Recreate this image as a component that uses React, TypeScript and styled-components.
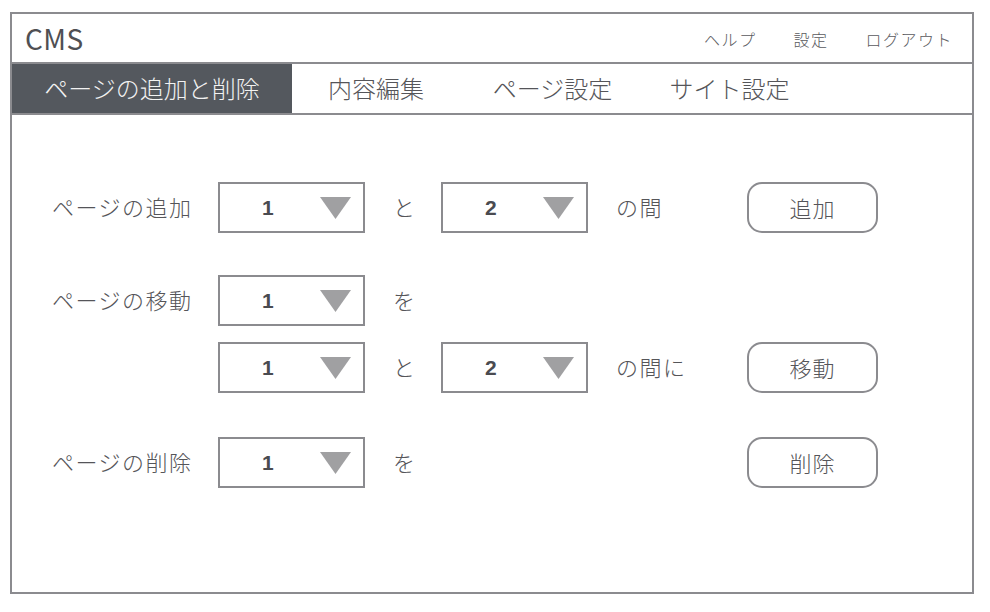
import React from 'react'
import styled, { createGlobalStyle } from 'styled-components'

const GlobalStyle = createGlobalStyle`
  body {
    margin: 0;
    background: #ffffff;
    font-family: "Noto Sans CJK JP", "Noto Sans", sans-serif;
    font-weight: 300;
    color: #555559;
  }
`

const Frame = styled.div`
  box-sizing: border-box;
  width: 964px;
  height: 582px;
  margin: 12px 0 0 10px;
  border: 2px solid #8b8b8f;
  display: flex;
  flex-direction: column;
`

const Header = styled.header`
  height: 48px;
  border-bottom: 2px solid #8b8b8f;
  display: flex;
  align-items: center;
  justify-content: space-between;
  padding: 0 19px 0 13px;
`

const Logo = styled.div`
  font-size: 28px;
  font-weight: 400;
  color: #4f4f53;
  letter-spacing: 0.5px;
`

const HeaderLinks = styled.nav`
  display: flex;
  gap: 37px;
  padding-top: 2px;
`

const HeaderLink = styled.a`
  font-size: 16px;
  letter-spacing: 1.5px;
  color: #5a5a5e;
  cursor: pointer;
`

const TabBar = styled.div`
  height: 49px;
  border-bottom: 2px solid #8b8b8f;
  display: flex;
`

const Tab = styled.div<{ $active?: boolean; $w: number }>`
  width: ${(p) => p.$w}px;
  display: flex;
  align-items: center;
  justify-content: center;
  padding-bottom: 2px;
  font-size: 24px;
  background: ${(p) => (p.$active ? '#54585e' : 'transparent')};
  color: ${(p) => (p.$active ? '#f2f2f2' : '#555559')};
  cursor: pointer;
`

const Content = styled.main`
  flex: 1;
  padding: 67px 0 0 40px;
`

const Row = styled.div<{ $top?: number }>`
  display: grid;
  grid-template-columns: 166px 147px 76px 147px 159px 131px;
  align-items: center;
  height: 51px;
  margin-top: ${(p) => p.$top ?? 0}px;
`

const Label = styled.div`
  font-size: 22px;
  letter-spacing: 1.5px;
  padding-bottom: 3px;
  color: #555559;
`

const Connector = styled.div`
  font-size: 22px;
  letter-spacing: 1.5px;
  padding: 0 0 3px 28px;
  color: #555559;
`

const SelectBox = styled.div`
  box-sizing: border-box;
  height: 51px;
  border: 2px solid #8b8b8f;
  display: flex;
  align-items: center;
  justify-content: space-between;
  padding: 0 12px 0 42px;
  cursor: pointer;
`

const SelectValue = styled.span`
  font-family: "Liberation Sans", Arial, sans-serif;
  font-weight: bold;
  font-size: 21px;
  color: #4a4b50;
`

const Caret = styled.svg`
  width: 31px;
  height: 22px;
  display: block;
`

const ActionButton = styled.button`
  box-sizing: border-box;
  height: 51px;
  width: 131px;
  border: 2px solid #8b8b8f;
  border-radius: 15px;
  background: #ffffff;
  font-family: "Noto Sans CJK JP", "Noto Sans", sans-serif;
  font-weight: 300;
  font-size: 22px;
  letter-spacing: 1px;
  padding-bottom: 3px;
  color: #555559;
  cursor: pointer;
`

const Select = ({ value }: { value: string }) => (
  <SelectBox>
    <SelectValue>{value}</SelectValue>
    <Caret viewBox="0 0 31 22">
      <polygon points="0,0 31,0 15.5,22" fill="#a0a0a2" />
    </Caret>
  </SelectBox>
)

const Empty = styled.div``

export default function App() {
  return (
    <>
      <GlobalStyle />
      <Frame>
        <Header>
          <Logo>CMS</Logo>
          <HeaderLinks>
            <HeaderLink>ヘルプ</HeaderLink>
            <HeaderLink>設定</HeaderLink>
            <HeaderLink>ログアウト</HeaderLink>
          </HeaderLinks>
        </Header>
        <TabBar>
          <Tab $active $w={280}>ページの追加と削除</Tab>
          <Tab $w={168}>内容編集</Tab>
          <Tab $w={185}>ページ設定</Tab>
          <Tab $w={169}>サイト設定</Tab>
        </TabBar>
        <Content>
          <Row>
            <Label>ページの追加</Label>
            <Select value="1" />
            <Connector>と</Connector>
            <Select value="2" />
            <Connector>の間</Connector>
            <ActionButton>追加</ActionButton>
          </Row>
          <Row $top={42}>
            <Label>ページの移動</Label>
            <Select value="1" />
            <Connector>を</Connector>
          </Row>
          <Row $top={16}>
            <Empty />
            <Select value="1" />
            <Connector>と</Connector>
            <Select value="2" />
            <Connector>の間に</Connector>
            <ActionButton>移動</ActionButton>
          </Row>
          <Row $top={44}>
            <Label>ページの削除</Label>
            <Select value="1" />
            <Connector>を</Connector>
            <Empty />
            <Empty />
            <ActionButton>削除</ActionButton>
          </Row>
        </Content>
      </Frame>
    </>
  )
}
